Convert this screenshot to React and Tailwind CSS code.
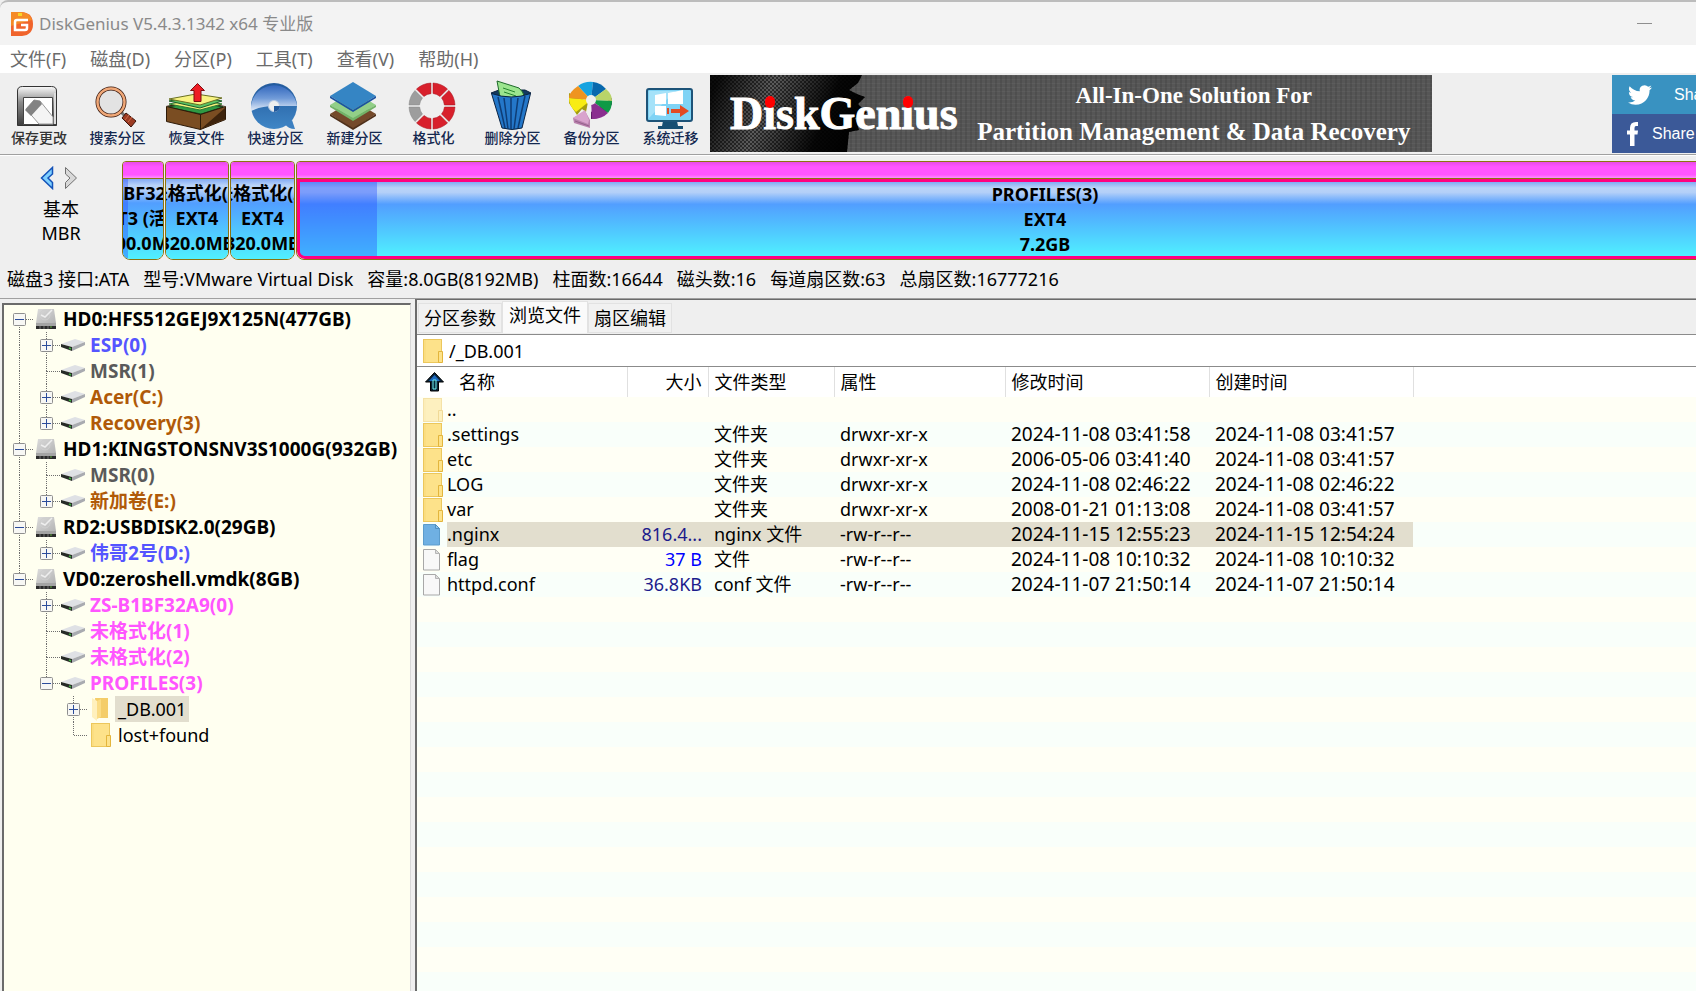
import React, { useState } from "react";

const menus = ["文件(F)", "磁盘(D)", "分区(P)", "工具(T)", "查看(V)", "帮助(H)"];

const tabs = ["分区参数", "浏览文件", "扇区编辑"];

const diskInfo = [
  "磁盘3 接口:ATA",
  "型号:VMware Virtual Disk",
  "容量:8.0GB(8192MB)",
  "柱面数:16644",
  "磁头数:16",
  "每道扇区数:63",
  "总扇区数:16777216",
];

// Cada celda: "v" línea vertical, "n" vacía, u/d = tramo arriba/abajo, +/- = caja
const treeRows = [
  { cells: ["d-"], icon: "disk", label: "HD0:HFS512GEJ9X125N(477GB)", color: "text-black" },
  { cells: ["v", "ud+"], icon: "part", label: "ESP(0)", color: "text-[#5555ff]" },
  { cells: ["v", "ud"], icon: "part", label: "MSR(1)", color: "text-[#5a5a5a]" },
  { cells: ["v", "ud+"], icon: "part", label: "Acer(C:)", color: "text-[#b05a08]" },
  { cells: ["v", "u+"], icon: "part", label: "Recovery(3)", color: "text-[#b05a08]" },
  { cells: ["ud-"], icon: "disk", label: "HD1:KINGSTONSNV3S1000G(932GB)", color: "text-black" },
  { cells: ["v", "ud"], icon: "part", label: "MSR(0)", color: "text-[#5a5a5a]" },
  { cells: ["v", "u+"], icon: "part", label: "新加卷(E:)", color: "text-[#b05a08]" },
  { cells: ["ud-"], icon: "disk", label: "RD2:USBDISK2.0(29GB)", color: "text-black" },
  { cells: ["v", "u+"], icon: "part", label: "伟哥2号(D:)", color: "text-[#5555ff]" },
  { cells: ["u-"], icon: "disk", label: "VD0:zeroshell.vmdk(8GB)", color: "text-black" },
  { cells: ["n", "ud+"], icon: "part", label: "ZS-B1BF32A9(0)", color: "text-[#ff55ff]" },
  { cells: ["n", "ud"], icon: "part", label: "未格式化(1)", color: "text-[#ff55ff]" },
  { cells: ["n", "ud"], icon: "part", label: "未格式化(2)", color: "text-[#ff55ff]" },
  { cells: ["n", "u-"], icon: "part", label: "PROFILES(3)", color: "text-[#ff55ff]" },
  { cells: ["n", "n", "ud+"], icon: "open", label: "_DB.001", color: "text-black" },
  { cells: ["n", "n", "u"], icon: "folder", label: "lost+found", color: "text-black" },
];

const files = [
  { icon: "up", name: "..", size: "", type: "", attr: "", modified: "", created: "" },
  { icon: "folder", name: ".settings", size: "", type: "文件夹", attr: "drwxr-xr-x", modified: "2024-11-08 03:41:58", created: "2024-11-08 03:41:57" },
  { icon: "folder", name: "etc", size: "", type: "文件夹", attr: "drwxr-xr-x", modified: "2006-05-06 03:41:40", created: "2024-11-08 03:41:57" },
  { icon: "folder", name: "LOG", size: "", type: "文件夹", attr: "drwxr-xr-x", modified: "2024-11-08 02:46:22", created: "2024-11-08 02:46:22" },
  { icon: "folder", name: "var", size: "", type: "文件夹", attr: "drwxr-xr-x", modified: "2008-01-21 01:13:08", created: "2024-11-08 03:41:57" },
  { icon: "selected", name: ".nginx", size: "816.4...", type: "nginx 文件", attr: "-rw-r--r--", modified: "2024-11-15 12:55:23", created: "2024-11-15 12:54:24" },
  { icon: "file", name: "flag", size: "37 B", type: "文件", attr: "-rw-r--r--", modified: "2024-11-08 10:10:32", created: "2024-11-08 10:10:32" },
  { icon: "file", name: "httpd.conf", size: "36.8KB", type: "conf 文件", attr: "-rw-r--r--", modified: "2024-11-07 21:50:14", created: "2024-11-07 21:50:14" },
];

const Folder = ({ faded }) => (
  <svg className={`h-6 w-5 shrink-0 ${faded ? "opacity-50" : ""}`} viewBox="0 0 20 24" aria-hidden="true">
    <rect x="0.5" y="0.5" width="18" height="23" fill="#fde28a" stroke="#ecc75c" />
    <path d="M15.5 23.5v-11h4v11z" fill="#fde28a" stroke="#e3b53c" />
    <path d="M2 1v22" stroke="#f9d978" />
  </svg>
);

const OpenFolder = () => (
  <svg className="h-6 w-5 shrink-0" viewBox="0 0 20 24" aria-hidden="true">
    <path d="M4 1h13v20H6z" fill="#f4cd69" />
    <path d="M1 1l5 3v20l-5-4z" fill="#fff0bd" />
    <path d="M6 4l4-2v18l-4 2z" fill="#fbdc85" />
  </svg>
);

const FileIcon = ({ blue }) => (
  <svg className="h-6 w-5 shrink-0" viewBox="0 0 20 24" aria-hidden="true">
    <path d="M0.5 1.5h12l4 4v16.5h-16z" fill={blue ? "#6fb0e3" : "#f8f8f8"} stroke={blue ? "#5c9ccc" : "#a8a8a8"} />
    <path d="M12.5 1.5v4h4z" fill={blue ? "#8ac3ee" : "#dcdcdc"} stroke={blue ? "#4f8fc0" : "#b5b5b5"} />
  </svg>
);

const DiskIcon = () => (
  <svg className="ml-0.5 mr-1.5 h-[22px] w-[22px] shrink-0" viewBox="0 0 22 22" aria-hidden="true">
    <defs>
      <linearGradient id="diskTop" x1="0" y1="0" x2="1" y2="1">
        <stop offset="0" stopColor="#dcdcdc" />
        <stop offset="1" stopColor="#b4b4b4" />
      </linearGradient>
    </defs>
    <path d="M3 1h16l2 14H1z" fill="url(#diskTop)" />
    <circle cx="10" cy="7" r="5" fill="none" stroke="#cfcfcf" />
    <path d="M17 2l-7 7-4-2" fill="none" stroke="#eee" strokeWidth="1.5" />
    <path d="M1 15h20v6H1z" fill="#a4a4a4" />
    <path d="M1 18h20v3H1z" fill="#2b2b2b" />
    <path d="M5 18v3M9 18v3M13 18v3" stroke="#777" />
    <path d="M15 19h2" stroke="#5fae3a" />
  </svg>
);

const PartIcon = () => (
  <svg className="ml-px mr-[5px] h-3 w-6 shrink-0" viewBox="0 0 24 12" aria-hidden="true">
    <path d="M0 5L14 0l10 3-13 5z" fill="#dfe1e5" />
    <path d="M11 8l13-5v3l-13 6z" fill="#a9abb0" />
    <path d="M0 5l11 3v4L0 8z" fill="#262a26" />
    <path d="M8 9l2 1" stroke="#3fae3f" strokeWidth="1.5" />
  </svg>
);

const GuideCell = ({ kind }) => {
  const up = kind === "v" || kind.includes("u");
  const down = kind === "v" || kind.includes("d");
  const node = kind !== "v" && kind !== "n";
  const box = kind.includes("+") || kind.includes("-");
  return (
    <svg className="h-[26px] w-[27px] shrink-0" viewBox="0 0 27 26" aria-hidden="true">
      <g stroke="#6e6e6e" strokeDasharray="1 1">
        {up && <path d="M13.5 0v13" />}
        {down && <path d="M13.5 13v13" />}
        {node && <path d="M14 13.5h13" />}
      </g>
      {box && (
        <g>
          <rect x="7.5" y="7.5" width="12" height="12" rx="1" fill="#f7f7f4" stroke="#8f8f8f" />
          <path d="M9 13.5h9" stroke="#2b4c9b" />
          {kind.includes("+") && <path d="M13.5 9v9" stroke="#2b4c9b" />}
        </g>
      )}
    </svg>
  );
};

const TreeRow = ({ row, selected, onSelect }) => {
  const plain = row.icon === "folder" || row.icon === "open";
  return (
    <li className="flex h-[26px] items-center">
      {row.cells.map((kind, i) => (
        <GuideCell key={i} kind={kind} />
      ))}
      {row.icon === "disk" && <DiskIcon />}
      {row.icon === "part" && <PartIcon />}
      {plain && (
        <span className="mx-1 flex">
          {row.icon === "open" ? <OpenFolder /> : <Folder />}
        </span>
      )}
      <button
        onClick={onSelect}
        className={`h-[26px] whitespace-nowrap leading-[26px] ${row.color} ${
          plain ? "px-[3px]" : "text-[19px] font-bold"
        } ${selected ? "bg-[#e2dece]" : ""}`}
      >
        {row.label}
      </button>
    </li>
  );
};

const SaveIcon = () => (
  <>
    <defs>
      <linearGradient id="save" x1="0" y1="0" x2="0" y2="1">
        <stop offset="0" stopColor="#fafafa" />
        <stop offset="0.4" stopColor="#8c8c8c" />
        <stop offset="1" stopColor="#3c3c3c" />
      </linearGradient>
    </defs>
    <path d="M8.5 47.5V13q0-4.5 5-4.5h29q5 0 5 4.5v34.5z" fill="url(#save)" stroke="#333" />
    <path d="M46 15v31" stroke="#ddd" strokeWidth="2" />
    <path d="M14.5 19.5h29v27h-29z" fill="#fff" stroke="#444" />
    <path d="M17 31l8-9 6 1 13 16v7H30z" fill="#f4f4f4" stroke="#999" />
    <path d="M16 32l9-10 6 1 2 3-11 12z" fill="#828282" />
  </>
);

const SearchIcon = () => (
  <>
    <path d="M34 34l5 5" stroke="#777" strokeWidth="3" />
    <circle cx="24" cy="24" r="13.5" fill="#e3e3e3" stroke="#3a1a10" strokeWidth="4" />
    <circle cx="24" cy="24" r="13.5" fill="none" stroke="#f0a878" strokeWidth="2.5" />
    <path d="M35 40l4-5 10 8-5 6z" fill="#9c3b22" stroke="#3a150c" />
    <path d="M38 42l4-5M41 44l4-5" stroke="#d06a4c" />
  </>
);

const RestoreIcon = () => (
  <>
    <path d="M0 28l27-6 32 6-25 10z" fill="#3c240e" />
    <path d="M2 29l28-5 27 5-22 7z" fill="#2f9a44" stroke="#174d20" />
    <path d="M3 26l27-5 26 5-22 6z" fill="#f6f07a" stroke="#2d7a33" />
    <path d="M3 23l27-5 26 5-22 7z" fill="#59c465" stroke="#1f5c28" />
    <path d="M3 21l27-5 26 4-22 7z" fill="#f8f381" stroke="#6a7022" />
    <path d="M0.5 28.5l34 8v15l-34-8z" fill="#7a4d22" stroke="#2d1a08" />
    <path d="M34.5 36.5l25-8v13l-25 10z" fill="#7a4d22" stroke="#2d1a08" />
    <path d="M35 51l24-21v11z" fill="#3d230c" />
    <path d="M31.5 5.5l7 7H35v11h-7v-11h-3.5z" fill="#ed1c24" stroke="#7d0c10" />
  </>
);

const QuickIcon = () => (
  <>
    <defs>
      <linearGradient id="disc" x1="0" y1="0" x2="0" y2="1">
        <stop offset="0" stopColor="#3468bd" />
        <stop offset="0.5" stopColor="#6f9ad8" />
        <stop offset="1" stopColor="#e4ecf8" />
      </linearGradient>
      <linearGradient id="discLow" x1="0" y1="0" x2="0" y2="1">
        <stop offset="0" stopColor="#235a9c" />
        <stop offset="1" stopColor="#3f86c6" />
      </linearGradient>
    </defs>
    <circle cx="29" cy="28" r="23" fill="url(#discLow)" />
    <path d="M6 33a23 23 0 1 1 46-5H29q-13 0-23 5z" fill="url(#disc)" />
    <path d="M47 42l3 9q-7 0-10-5z" fill="#3c80c1" />
    <circle cx="29" cy="28" r="5.5" fill="#efefef" stroke="#b9cbe4" />
    <path d="M29 28h6q0 5-6 6z" fill="#235a9c" />
  </>
);

const NewIcon = () => (
  <>
    <path d="M6 36l23-14 23 14-23 15z" fill="#74492a" />
    <path d="M6 36v2l23 14 23-14v-2L29 50z" fill="#4f2f19" />
    <path d="M6 27l23-14 23 14-23 14z" fill="#92cf88" />
    <path d="M6 27v2l23 14 23-14v-2L29 40z" fill="#72b368" />
    <path d="M6 18L29 4l23 14-23 14z" fill="#3585c4" />
    <path d="M6 18v2l23 14 23-14v-2L29 32z" fill="#1b52a0" />
  </>
);

const FormatIcon = () => (
  <>
    {[0, 45, 90, 135, 180, 225, 270, 315].map((angle) => (
      <path
        key={angle}
        transform={`rotate(${angle} 29 28)`}
        d="M30 5a23 23 0 0 1 14.5 6l-7.5 7.5a13 13 0 0 0-7-3z"
        fill={angle === 225 || angle === 270 ? "#9d9d9d" : "#d8202c"}
        stroke={angle === 225 || angle === 270 ? "#868686" : "#a5121c"}
        strokeWidth="0.5"
      />
    ))}
  </>
);

const DeleteIcon = () => (
  <>
    <path d="M9 15l8-3h26l6 3-6 5H15z" fill="#12395f" stroke="#0c2440" />
    <path d="M18 19L15 3l22 7q4 3 6 10z" fill="#9be58e" stroke="#1e6a2a" />
    <path d="M21 10l12 4M22 14l12 4" stroke="#25852f" />
    <path d="M9.5 15.5q20 7 39 0L40 50q-10 3-20 0z" fill="#2477c9" stroke="#0b2342" />
    <path d="M16 19l7 31M22 20l4 31M29 20v31M36 20l-4 31M43 18l-7 32" stroke="#0e3d76" strokeWidth="1.5" />
  </>
);

const BackupIcon = () => (
  <>
    <path d="M8 15v10l8 12 5-6 4 3 2-10z" fill="#a49d10" />
    <path d="M30 34v7q13 0 21-15v-6z" fill="#571a61" />
    <path d="M30 22L17 8q7-5 15-4z" fill="#17a3e0" />
    <path d="M30 22l2-18q8 1 13 7z" fill="#0868ad" />
    <path d="M30 22l15-11q6 5 6 12z" fill="#b9d469" />
    <path d="M30 22l21 1q0 7-4 12z" fill="#0e9a46" />
    <path d="M30 22l17 13q-6 6-16 6z" fill="#8a2f8f" />
    <path d="M30 22L15 34q-7-6-7-14z" fill="#f8ec13" />
    <path d="M30 22L8 20q0-6 9-12z" fill="#ef9420" />
    <circle cx="30" cy="22" r="5" fill="#efefef" />
    <path d="M12 40l12-7 5 9v8L13 45z" fill="#b981ad" />
    <path d="M12 40l12-8 4 10-1 4z" fill="#d9a3cd" />
    <path d="M14 43l14 5" stroke="#94608b" />
  </>
);

const MigrateIcon = () => (
  <>
    <path d="M23 43h14l1 5h5v3H18v-3h4z" fill="#184f73" />
    <rect x="7" y="11" width="45" height="32" rx="2" fill="#7fd3f5" stroke="#1d5378" strokeWidth="2" />
    <path d="M9 13h26L9 40z" fill="#a5e2f9" />
    <path d="M15 17l11-2v11H15zM28 15l15-3v14H28zM15 28h11v10l-11-1z" fill="#fff" />
    <path d="M27 30h2v6h-2zM31 31h9v-4l9 6-9 6v-4h-9z" fill="#e34a22" />
  </>
);

const tools = [
  { label: "保存更改", Icon: SaveIcon },
  { label: "搜索分区", Icon: SearchIcon },
  { label: "恢复文件", Icon: RestoreIcon },
  { label: "快速分区", Icon: QuickIcon },
  { label: "新建分区", Icon: NewIcon },
  { label: "格式化", Icon: FormatIcon },
  { label: "删除分区", Icon: DeleteIcon },
  { label: "备份分区", Icon: BackupIcon },
  { label: "系统迁移", Icon: MigrateIcon },
];

const TitleBar = () => (
  <header className="flex h-[45px] items-center rounded-tl-lg border-t-2 border-[#bcbcbc] bg-[#f3f3f3] pl-[11px] pr-11">
    <svg className="mr-1.5 h-6 w-[22px]" viewBox="0 0 22 24" aria-hidden="true">
      <path d="M0 0h11q11 1 11 12T11 24H0z" fill="#f0642c" />
      <path d="M0 0h11q8 1 10 8L0 14z" fill="#f58a26" />
      <path d="M7 1h4v3H7z" fill="#f7d428" />
      <path d="M17 8H6q-2 0-2 2v8h10q2 0 2-2v-3h-6" fill="none" stroke="#fff" strokeWidth="2.5" />
    </svg>
    <h1 className="text-[17px] text-[#8a8a8a]">DiskGenius V5.4.3.1342 x64 专业版</h1>
    <button aria-label="最小化" className="ml-auto h-6 w-[15px]">
      <span className="block h-px bg-[#8f8f8f]" />
    </button>
  </header>
);

// La "i" del logotipo lleva el punto rojo encima
const DottedI = () => (
  <span className="relative">
    i
    <span className="absolute top-2 left-0.5 h-3 w-2.5 rounded-full bg-[#f00]" />
  </span>
);

// Malla oscura con borde dentado detrás del logotipo
const CarbonMesh = () => (
  <svg className="absolute inset-y-0 left-0 h-[77px] w-[170px]" viewBox="0 0 170 77" aria-hidden="true">
    <defs>
      <pattern id="mesh" width="4" height="4" patternUnits="userSpaceOnUse">
        <circle cx="1" cy="1" r="1" fill="#000" />
        <circle cx="3" cy="3" r="1" fill="#000" />
      </pattern>
      <linearGradient id="carbon" x1="0" y1="0.3" x2="1" y2="0.5">
        <stop offset="0" stopColor="#0c0c0c" />
        <stop offset="0.35" stopColor="#5c5c5c" />
        <stop offset="0.75" stopColor="#080808" />
        <stop offset="1" stopColor="#000" />
      </linearGradient>
    </defs>
    <path id="edge" d="M0 0h152l-4 8-9 7 8 4 8 3-7 7 9 9-12 5 4 12-10 2-2 20H0z" fill="url(#carbon)" />
    <path d="M0 0h152l-4 8-9 7 8 4 8 3-7 7 9 9-12 5 4 12-10 2-2 20H0z" fill="url(#mesh)" opacity="0.7" />
  </svg>
);

const Banner = () => (
  <div className="relative flex h-[77px] w-[722px] shrink-0 overflow-hidden bg-[#565656] bg-[repeating-linear-gradient(90deg,#00000018_0_2px,transparent_2px_5px),repeating-linear-gradient(0deg,#ffffff0a_0_1px,transparent_1px_4px)] font-['Liberation_Serif',serif] font-bold text-white">
    <CarbonMesh />
    <span className="relative pl-5 text-[46px] leading-[77px] [-webkit-text-stroke:1px_white]">
      D<DottedI />skGen<DottedI />us
    </span>
    <p className="flex-1 pt-[3px] pr-0.5 text-center whitespace-nowrap">
      <span className="block text-[23px] leading-9">All-In-One Solution For</span>
      <span className="block text-[25px] leading-9">Partition Management &amp; Data Recovery</span>
    </p>
  </div>
);

const Toolbar = () => (
  <div className="flex h-[82px] border-b border-[#a0a0a0] pt-0.5">
    {tools.map(({ label, Icon }, i) => (
      <button
        key={label}
        className={`flex shrink-0 flex-col items-center pt-[3px] ${i === 0 ? "w-[78px]" : "w-[79px]"}`}
      >
        <svg className="h-[52px] w-[61px]" viewBox="0 0 61 52" aria-hidden="true">
          <Icon />
        </svg>
        <span className={`text-sm leading-4 font-medium ${i === 0 ? "text-[#333]" : "text-[#14284f]"}`}>
          {label}
        </span>
      </button>
    ))}
    <Banner />
    <div className="ml-auto flex w-[84px] flex-col overflow-hidden font-['Liberation_Sans',sans-serif] whitespace-nowrap text-white">
      <a href="#twitter" className="flex h-[39px] items-center bg-[#3992c1] pl-4 text-base">
        <svg className="mr-[22px] h-6 w-6 shrink-0" viewBox="0 0 24 24" fill="currentColor" aria-hidden="true">
          <path d="M23.95 4.57a10 10 0 0 1-2.82.77 4.96 4.96 0 0 0 2.16-2.72c-.95.55-2 .95-3.12 1.18a4.92 4.92 0 0 0-8.38 4.48C7.69 8.1 4.07 6.13 1.64 3.16a4.82 4.82 0 0 0-.67 2.47c0 1.71.87 3.21 2.19 4.1a4.9 4.9 0 0 1-2.23-.62v.06a4.92 4.92 0 0 0 3.95 4.83 5 5 0 0 1-2.21.08 4.94 4.94 0 0 0 4.6 3.42A9.87 9.87 0 0 1 0 19.54a13.99 13.99 0 0 0 7.55 2.21c9.05 0 14-7.5 14-13.98 0-.21 0-.42-.02-.63a9.94 9.94 0 0 0 2.46-2.55z" />
        </svg>
        Share
      </a>
      <a href="#facebook" className="flex h-[39px] items-center bg-[#3b5998] pl-[15px] text-base">
        <svg className="mr-[14px] h-6 w-[11px] shrink-0" viewBox="0 0 11 24" fill="currentColor" aria-hidden="true">
          <path d="M3 24V12.5H0v-4h3V6q0-6 6-6h2v4H9Q7.5 4 7.5 6v2.5H11l-.5 4h-3V24z" />
        </svg>
        Share
      </a>
    </div>
  </div>
);

const DiskBlock = ({ lines, className, usedClass, selected }) => (
  <div className={`flex flex-col overflow-hidden rounded-t-sm rounded-b-lg border border-[#8b7410] ${className}`}>
    <div className="h-[17px] shrink-0 border-b border-[#8b7410] bg-[linear-gradient(180deg,#e84ae8_0,#ff55ff_30%,#ff55ff_80%,#ff90ff_100%)]" />
    <div
      className={`relative flex-1 overflow-hidden bg-[linear-gradient(180deg,#82aaf4_0,#b9d3f8_8%,#b4d0f8_14%,#529eff_30%,#50c8ff_66%,#50f0ff_100%)] text-center font-bold leading-[25px] ${
        selected ? "rounded-b-lg border-[3px] border-[#ff0080]" : "pt-0.5"
      }`}
    >
      <div className={`absolute inset-y-0 left-0 bg-[#2850ff]/40 ${usedClass}`} />
      {lines.map((line) => (
        <div key={line} className="relative flex justify-center whitespace-nowrap">
          <span className="shrink-0">{line}</span>
        </div>
      ))}
    </div>
  </div>
);

const DiskMap = () => (
  <section className="border-t border-white pt-[5px]">
    <div className="flex h-[99px] gap-px overflow-hidden">
      <div className="mr-[-1px] flex w-[122px] shrink-0 flex-col items-center pt-[5px] leading-6">
        <div className="mb-[7px] flex gap-2.5 pr-1">
          <button aria-label="上一个磁盘">
            <svg className="h-6 w-[14px]" viewBox="0 0 14 24" aria-hidden="true">
              <path d="M12.5 1.5V8L8 12l4.5 4.5v6L1.5 12z" fill="#7fd0ff" stroke="#1352b8" strokeWidth="1.5" />
            </svg>
          </button>
          <button aria-label="下一个磁盘">
            <svg className="h-6 w-[14px]" viewBox="0 0 14 24" aria-hidden="true">
              <path d="M1.5 1.5L12.5 12l-11 10.5v-6L6 12 1.5 8z" fill="#d8d8d8" stroke="#707070" />
            </svg>
          </button>
        </div>
        <span>基本</span>
        <span>MBR</span>
      </div>
      <DiskBlock lines={["ZS-B1BF32A9(0)", "EXT3 (活动)", "100.0MB"]} className="w-[42px] shrink-0" usedClass="w-[5px]" />
      <DiskBlock lines={["未格式化(1)", "EXT4", "320.0MB"]} className="w-16 shrink-0" usedClass="w-0" />
      <DiskBlock lines={["未格式化(2)", "EXT4", "320.0MB"]} className="w-[65px] shrink-0" usedClass="w-0" />
      <DiskBlock lines={["PROFILES(3)", "EXT4", "7.2GB"]} className="mr-[-98px] flex-1" usedClass="w-[77px]" selected />
    </div>
    <p className="flex h-[39px] gap-[14px] border-b border-[#a0a0a0] pl-[7px] leading-[38px] whitespace-nowrap">
      {diskInfo.map((item) => (
        <span key={item}>{item}</span>
      ))}
    </p>
  </section>
);

const rowIcon = (icon) => {
  if (icon === "folder" || icon === "up") return <Folder faded={icon === "up"} />;
  return <FileIcon blue={icon === "selected"} />;
};

const FilePanel = () => {
  const [active, setActive] = useState("浏览文件");

  return (
    <main className="flex min-w-0 flex-1 flex-col border-t border-l-2 border-[#6b6b6b]">
      <div className="flex h-[34px] items-end bg-[#efefef] pb-px pl-px" role="tablist">
        {tabs.map((tab) => (
          <button
            key={tab}
            role="tab"
            aria-selected={tab === active}
            onClick={() => setActive(tab)}
            className={`border border-[#e2e2e2] ${
              tab === active ? "h-8 border-b-0 bg-[#fafafa] px-1.5 pb-1" : "h-[30px] bg-[#f1f1f1] px-[5px]"
            }`}
          >
            {tab}
          </button>
        ))}
      </div>
      <div className="flex h-[33px] items-center border-y border-[#8b8b8b] bg-white pl-1.5">
        <Folder />
        <input
          aria-label="路径"
          defaultValue="/_DB.001"
          className="ml-1.5 h-7 flex-1 bg-transparent outline-none"
        />
      </div>
      <div className="flex-1 overflow-hidden bg-[linear-gradient(#fffff5_50%,#f9fffa_50%)] bg-[length:100%_50px] bg-[position:0_30px]">
        <table className="w-full table-fixed border-collapse whitespace-nowrap">
          <colgroup>
            <col className="w-[210px]" />
            <col className="w-[81px]" />
            <col className="w-[126px]" />
            <col className="w-[171px]" />
            <col className="w-[204px]" />
            <col className="w-[204px]" />
            <col />
          </colgroup>
          <thead>
            <tr className="h-[30px] bg-white text-left leading-[29px] *:border-r *:border-[#e0e0e0] *:p-0 *:font-normal">
              <th>
                <span className="flex items-center pl-2">
                  <svg className="mr-[15px] h-5 w-[19px]" viewBox="0 0 19 20" aria-hidden="true">
                    <path d="M9.5 0.5L18.5 10h-5v9h-8v-9h-5z" fill="#0a2338" stroke="#000" />
                    <path d="M9.5 3L15 9H4z" fill="#1c6ac0" />
                    <path d="M8 8h3v9H8z" fill="#062a3c" stroke="#6ff0f0" />
                  </svg>
                  名称
                </span>
              </th>
              <th className="text-right">
                <span className="pr-1.5">大小</span>
              </th>
              <th><span className="pl-1.5">文件类型</span></th>
              <th><span className="pl-1.5">属性</span></th>
              <th><span className="pl-1.5">修改时间</span></th>
              <th><span className="pl-1.5">创建时间</span></th>
              <th className="border-r-0!"></th>
            </tr>
          </thead>
          <tbody>
            {files.map((file) => {
              const hl = file.icon === "selected" ? "bg-[#e2dece]" : "";
              return (
                <tr key={file.name} className="h-[25px] leading-[25px] *:p-0">
                  <td>
                    <span className="flex items-center pl-1.5">
                      {rowIcon(file.icon)}
                      <span className={`ml-1 flex-1 ${hl}`}>{file.name}</span>
                    </span>
                  </td>
                  <td className={`text-right ${file.name === "flag" ? "text-[#0000ff]" : "text-[#1c1c8c]"} ${hl}`}>
                    <span className="pr-1.5">{file.size}</span>
                  </td>
                  <td className={hl}><span className="pl-1.5">{file.type}</span></td>
                  <td className={hl}><span className="pl-1.5">{file.attr}</span></td>
                  <td className={`text-[19px] ${hl}`}><span className="pl-1.5">{file.modified}</span></td>
                  <td className={`text-[19px] ${hl}`}><span className="pl-1.5">{file.created}</span></td>
                  <td></td>
                </tr>
              );
            })}
          </tbody>
        </table>
      </div>
    </main>
  );
};

const App = () => {
  const [selected, setSelected] = useState("_DB.001");

  return (
    <div className="flex h-screen flex-col overflow-hidden bg-[#efefef] font-['Noto_Sans','Noto_Sans_CJK_SC',sans-serif] text-[18px] text-black">
      <TitleBar />
      <nav className="flex h-7 items-center gap-6 bg-white pl-[10px] text-[#6b6b6b]">
        {menus.map((menu) => (
          <button key={menu}>{menu}</button>
        ))}
      </nav>
      <Toolbar />
      <DiskMap />
      <div className="flex min-h-0 flex-1">
        <aside className="mr-1 ml-0.5 mt-1 w-[409px] shrink-0 overflow-hidden border-t-2 border-r border-l-2 border-t-[#6b6b6b] border-r-[#d8d8d8] border-l-[#6b6b6b] bg-[#fffff0] pt-px pl-0.5">
          <ul>
            {treeRows.map((row, i) => (
              <TreeRow
                key={i}
                row={row}
                selected={row.label === selected}
                onSelect={() => setSelected(row.label)}
              />
            ))}
          </ul>
        </aside>
        <FilePanel />
      </div>
    </div>
  );
};

export default App;
